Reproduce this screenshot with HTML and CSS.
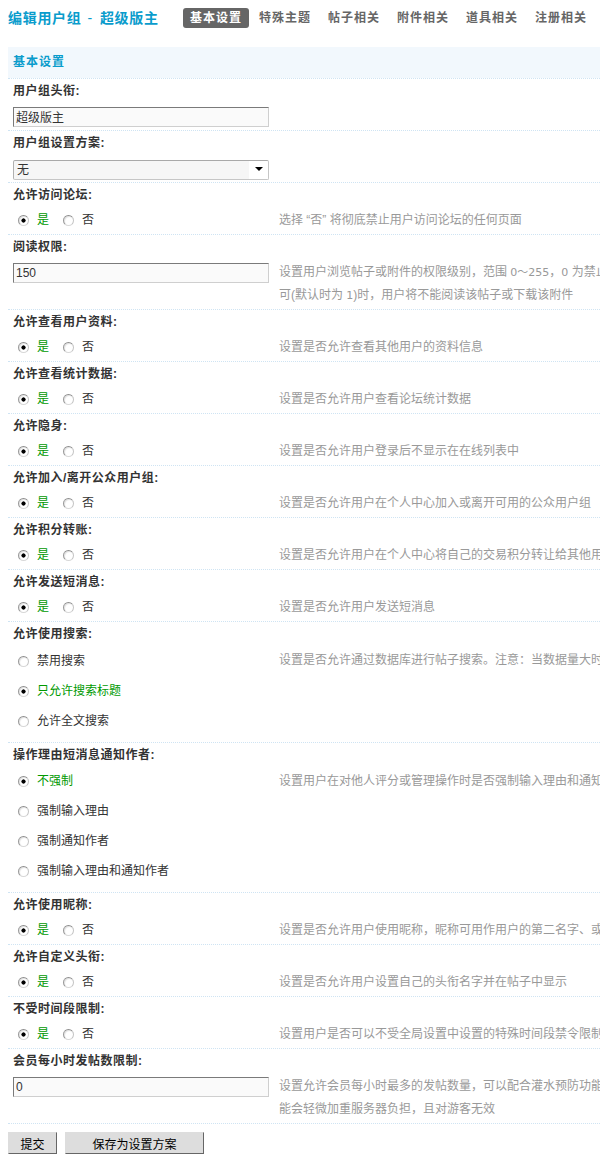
FILE: index.html
```html
<!DOCTYPE html>
<html lang="zh-CN">
<head>
<meta charset="utf-8">
<title>编辑用户组 - 超级版主</title>
<link rel="stylesheet" href="styles.css">
</head>
<body>
<div class="page">
  <div class="topbar">
    <h1 class="title">编辑用户组<span class="sep">-</span>超级版主</h1>
    <ul class="tabs">
      <li class="tab current">基本设置</li>
      <li class="tab">特殊主题</li>
      <li class="tab">帖子相关</li>
      <li class="tab">附件相关</li>
      <li class="tab">道具相关</li>
      <li class="tab">注册相关</li>
    </ul>
  </div>

  <div class="partition">基本设置</div>

  <div class="item">
    <div class="lbl">用户组头衔:</div>
    <div class="row">
      <div class="form"><input class="txt" type="text" value="超级版主"></div>
      <div class="tips"></div>
    </div>
  </div>

  <div class="item">
    <div class="lbl">用户组设置方案:</div>
    <div class="row">
      <div class="form"><span class="selwrap"><select class="sel"><option>无</option></select></span></div>
      <div class="tips"></div>
    </div>
  </div>

  <div class="item">
    <div class="lbl">允许访问论坛:</div>
    <div class="row">
      <div class="form"><label class="opt on"><input class="radio" type="radio" name="r1" checked>是</label><label class="opt"><input class="radio" type="radio" name="r1">否</label></div>
      <div class="tips">选择 “否” 将彻底禁止用户访问论坛的任何页面</div>
    </div>
  </div>

  <div class="item">
    <div class="lbl">阅读权限:</div>
    <div class="row">
      <div class="form"><input class="txt" type="text" value="150"></div>
      <div class="tips">设置用户浏览帖子或附件的权限级别，范围 <span class="num">0～255</span>，<span class="num">0</span> 为禁止用户浏览任何帖子或附件。当用户的阅读权限小于帖子的阅读权限许<br>可(默认时为 <span class="num">1</span>)时，用户将不能阅读该帖子或下载该附件</div>
    </div>
  </div>

  <div class="item">
    <div class="lbl">允许查看用户资料:</div>
    <div class="row">
      <div class="form"><label class="opt on"><input class="radio" type="radio" name="r2" checked>是</label><label class="opt"><input class="radio" type="radio" name="r2">否</label></div>
      <div class="tips">设置是否允许查看其他用户的资料信息</div>
    </div>
  </div>

  <div class="item">
    <div class="lbl">允许查看统计数据:</div>
    <div class="row">
      <div class="form"><label class="opt on"><input class="radio" type="radio" name="r3" checked>是</label><label class="opt"><input class="radio" type="radio" name="r3">否</label></div>
      <div class="tips">设置是否允许用户查看论坛统计数据</div>
    </div>
  </div>

  <div class="item">
    <div class="lbl">允许隐身:</div>
    <div class="row">
      <div class="form"><label class="opt on"><input class="radio" type="radio" name="r4" checked>是</label><label class="opt"><input class="radio" type="radio" name="r4">否</label></div>
      <div class="tips">设置是否允许用户登录后不显示在在线列表中</div>
    </div>
  </div>

  <div class="item">
    <div class="lbl">允许加入/离开公众用户组:</div>
    <div class="row">
      <div class="form"><label class="opt on"><input class="radio" type="radio" name="r5" checked>是</label><label class="opt"><input class="radio" type="radio" name="r5">否</label></div>
      <div class="tips">设置是否允许用户在个人中心加入或离开可用的公众用户组</div>
    </div>
  </div>

  <div class="item">
    <div class="lbl">允许积分转账:</div>
    <div class="row">
      <div class="form"><label class="opt on"><input class="radio" type="radio" name="r6" checked>是</label><label class="opt"><input class="radio" type="radio" name="r6">否</label></div>
      <div class="tips">设置是否允许用户在个人中心将自己的交易积分转让给其他用户</div>
    </div>
  </div>

  <div class="item">
    <div class="lbl">允许发送短消息:</div>
    <div class="row">
      <div class="form"><label class="opt on"><input class="radio" type="radio" name="r7" checked>是</label><label class="opt"><input class="radio" type="radio" name="r7">否</label></div>
      <div class="tips">设置是否允许用户发送短消息</div>
    </div>
  </div>

  <div class="item">
    <div class="lbl">允许使用搜索:</div>
    <div class="row list">
      <ul class="form opts">
        <li><label class="opt"><input class="radio" type="radio" name="r8">禁用搜索</label></li>
        <li><label class="opt on"><input class="radio" type="radio" name="r8" checked>只允许搜索标题</label></li>
        <li><label class="opt"><input class="radio" type="radio" name="r8">允许全文搜索</label></li>
      </ul>
      <div class="tips">设置是否允许通过数据库进行帖子搜索。注意：当数据量大时，全文搜索将非常耗费服务器资源</div>
    </div>
  </div>

  <div class="item">
    <div class="lbl">操作理由短消息通知作者:</div>
    <div class="row list">
      <ul class="form opts">
        <li><label class="opt on"><input class="radio" type="radio" name="r9" checked>不强制</label></li>
        <li><label class="opt"><input class="radio" type="radio" name="r9">强制输入理由</label></li>
        <li><label class="opt"><input class="radio" type="radio" name="r9">强制通知作者</label></li>
        <li><label class="opt"><input class="radio" type="radio" name="r9">强制输入理由和通知作者</label></li>
      </ul>
      <div class="tips">设置用户在对他人评分或管理操作时是否强制输入理由和通知作者</div>
    </div>
  </div>

  <div class="item">
    <div class="lbl">允许使用昵称:</div>
    <div class="row">
      <div class="form"><label class="opt on"><input class="radio" type="radio" name="r10" checked>是</label><label class="opt"><input class="radio" type="radio" name="r10">否</label></div>
      <div class="tips">设置是否允许用户使用昵称，昵称可用作用户的第二名字、或者在帖子中显示</div>
    </div>
  </div>

  <div class="item">
    <div class="lbl">允许自定义头衔:</div>
    <div class="row">
      <div class="form"><label class="opt on"><input class="radio" type="radio" name="r11" checked>是</label><label class="opt"><input class="radio" type="radio" name="r11">否</label></div>
      <div class="tips">设置是否允许用户设置自己的头衔名字并在帖子中显示</div>
    </div>
  </div>

  <div class="item">
    <div class="lbl">不受时间段限制:</div>
    <div class="row">
      <div class="form"><label class="opt on"><input class="radio" type="radio" name="r12" checked>是</label><label class="opt"><input class="radio" type="radio" name="r12">否</label></div>
      <div class="tips">设置用户是否可以不受全局设置中设置的特殊时间段禁令限制</div>
    </div>
  </div>

  <div class="item">
    <div class="lbl">会员每小时发帖数限制:</div>
    <div class="row">
      <div class="form"><input class="txt" type="text" value="0"></div>
      <div class="tips">设置允许会员每小时最多的发帖数量，可以配合灌水预防功能进一步控制会员发帖，0 为不限制。此功<br>能会轻微加重服务器负担，且对游客无效</div>
    </div>
  </div>

  <div class="actions">
    <button class="btn btn-submit" type="button">提交</button>
    <button class="btn btn-save" type="button">保存为设置方案</button>
  </div>
</div>
<div class="bottomline"></div>
</body>
</html>
```

FILE: styles.css
```css
html, body {
  margin: 0;
  padding: 0;
  overflow: hidden;
  background: #fff;
}

body {
  font-family: "Liberation Sans", "Noto Sans CJK SC", sans-serif;
  font-size: 12px;
  color: #333;
}

.page {
  width: 1100px;
  padding-left: 8px;
}

/* top bar */
.topbar {
  display: flex;
  align-items: center;
  height: 20px;
  padding-top: 8px;
  margin-bottom: 19px;
}

.title {
  flex: none;
  width: 175px;
  margin: 0;
  font-size: 14px;
  font-weight: bold;
  letter-spacing: 0.7px;
  color: #0a9ccc;
  white-space: nowrap;
  line-height: 20px;
}

.sep {
  margin: 0 7px 0 6px;
  font-weight: normal;
}

.tabs {
  display: flex;
  list-style: none;
  margin: 0;
  padding: 0;
}

.tab {
  height: 20px;
  line-height: 20px;
  padding: 0 7px;
  margin-right: 3px;
  border-radius: 3px;
  font-weight: bold;
  letter-spacing: 1px;
  color: #666;
  white-space: nowrap;
}

.tab.current {
  background: #666;
  color: #fff;
}

/* section header */
.partition {
  height: 31px;
  line-height: 31px;
  padding-left: 5px;
  background: #f2f8fd;
  color: #0a9ccc;
  font-weight: bold;
  letter-spacing: 1px;
}

/* items */
.item {
  border-top: 1px dotted #cfe4f3;
}

.lbl {
  padding: 3px 5px 1px;
  line-height: 18px;
  font-weight: bold;
  letter-spacing: 0.5px;
  color: #333;
}

.row {
  display: flex;
  align-items: flex-start;
  padding: 4px 0 2px;
}

.row.list {
  padding: 2px 0 5.5px;
}

.form {
  flex: none;
  width: 266px;
  box-sizing: border-box;
  padding: 0 5px;
  line-height: 23px;
  height: 23px;
  display: flex;
  align-items: center;
}

.opts {
  display: block;
  height: auto;
  list-style: none;
  margin: 0;
}

.opts li {
  height: 30px;
  display: flex;
  align-items: center;
}

.tips {
  flex: none;
  padding-left: 5px;
  line-height: 23px;
  color: #999;
  white-space: nowrap;
}

.row.list .tips {
  padding-top: 3px;
}

.num {
  font-family: "DejaVu Sans", "Noto Sans CJK SC", sans-serif;
  font-size: 11px;
}

/* inputs */
.txt {
  box-sizing: border-box;
  width: 256px;
  height: 20px;
  margin: 0;
  padding: 0 2px;
  border: 1px solid;
  border-color: #7a7a7a #cfcfcf #cfcfcf #7a7a7a;
  background: #fafafa;
  font-family: "Liberation Sans", "Noto Sans CJK SC", sans-serif;
  font-size: 12px;
  color: #333;
  outline: none;
}

.selwrap {
  position: relative;
  display: inline-block;
  width: 256px;
  height: 20px;
}

.sel {
  appearance: none;
  -webkit-appearance: none;
  box-sizing: border-box;
  width: 256px;
  height: 20px;
  margin: 0;
  padding: 0 3px;
  border: 1px solid;
  border-color: #a9a9a9 #c6c6c6 #c6c6c6 #b0b0b0;
  border-radius: 2px;
  background: linear-gradient(to right, #f6f6f6 0, #f6f6f6 235px, #fff 235px);
  font-family: "Liberation Sans", "Noto Sans CJK SC", sans-serif;
  font-size: 12px;
  color: #333;
}

.selwrap::after {
  content: "";
  position: absolute;
  right: 6px;
  top: 8px;
  border-left: 4px solid transparent;
  border-right: 4px solid transparent;
  border-top: 4px solid #000;
}

/* radios */
.opt {
  display: inline-flex;
  align-items: center;
  color: #333;
  white-space: nowrap;
}

.opt + .opt {
  margin-left: 9px;
}

.opt.on {
  color: #090;
}

.radio {
  appearance: none;
  -webkit-appearance: none;
  box-sizing: border-box;
  width: 11px;
  height: 11px;
  margin: 0 8px 0 5px;
  border: 1px solid;
  border-color: #8e8e8e #c4c4c4 #d8d8d8 #9a9a9a;
  border-radius: 50%;
  background: #fff;
  box-shadow: inset 1px 1px 1px #e2e2e2;
}

.radio:checked {
  background: radial-gradient(circle, #000 0, #000 1.8px, #fff 2.4px);
}

/* buttons */
.actions {
  display: flex;
  gap: 8px;
  border-top: 1px dotted #cfe4f3;
  padding: 8px 0 3px;
}

.btn {
  box-sizing: border-box;
  height: 22px;
  margin: 0;
  padding: 0;
  border: 1px solid;
  border-color: #ddd #666 #666 #ddd;
  background: #ddd;
  font-family: "Liberation Sans", "Noto Sans CJK SC", sans-serif;
  font-size: 12px;
  color: #000;
}

.btn-submit {
  width: 49px;
}

.btn-save {
  width: 139px;
}

.bottomline {
  height: 2px;
  background: #b2d0dc;
}
```
